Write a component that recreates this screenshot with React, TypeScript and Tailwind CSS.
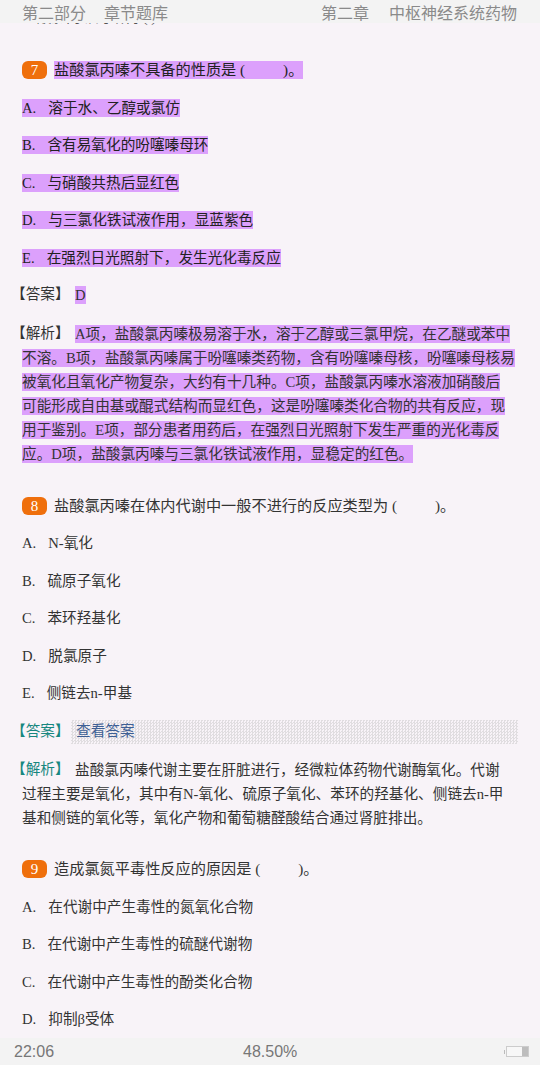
import React from 'react';

const serif = "font-['Liberation_Serif','Noto_Sans_CJK_SC',serif]";

const Mark: React.FC<{ on?: boolean; children: React.ReactNode }> = ({ on, children }) => (
  <span className={`inline-block h-[18px] leading-[18px] whitespace-pre ${on ? 'bg-[#dca0fc]' : ''}`}>{children}</span>
);

const Badge: React.FC<{ n: number }> = ({ n }) => (
  <span className="mr-[7px] flex h-[18px] w-[25px] shrink-0 items-center justify-center rounded-[6px] bg-[#ef6f0c] text-[15px] text-white">
    {n}
  </span>
);

const Question: React.FC<{ n: number; text: string; on?: boolean }> = ({ n, text, on }) => (
  <div className="flex h-[37.5px] items-center pl-[22px] text-[15.2px]">
    <Badge n={n} />
    <Mark on={on}>{text}</Mark>
  </div>
);

const Option: React.FC<{ k: string; text: string; on?: boolean }> = ({ k, text, on }) => (
  <div className="flex h-[37.5px] items-center pl-[22px]">
    <Mark on={on}>
      {k}.<span className="inline-block w-[12px]" />
      {text}
    </Mark>
  </div>
);

const Label: React.FC<{ text: string; teal?: boolean }> = ({ text, teal }) => (
  <span className={`-ml-[11px] w-[64px] shrink-0 ${teal ? 'text-[#17877f]' : 'text-[#333]'}`}>【{text}】</span>
);

const Para: React.FC<{ label: string; lines: string[]; on?: boolean; teal?: boolean }> = ({ label, lines, on, teal }) => (
  <div className="flex flex-col">
    {lines.map((line, i) => (
      <div key={i} className="flex h-[24px] items-center pl-[22px]">
        {i === 0 && <Label text={label} teal={teal} />}
        <Mark on={on}>{line}</Mark>
      </div>
    ))}
  </div>
);

export default function App() {
  return (
    <div className={`flex h-[1065px] w-[540px] flex-col overflow-hidden bg-[#f8f3f8] text-[14.65px] text-[#333] ${serif}`}>
      <header className="relative z-10 flex h-[23px] shrink-0 items-center justify-between bg-[#f3f3f3] pl-[22px] pr-[23px] font-['Noto_Sans_CJK_SC',sans-serif] text-[16px] text-[#8a8a8a]">
        <div className="flex gap-[18px]">
          <span>第二部分</span>
          <span>章节题库</span>
        </div>
        <div className="flex gap-[20px]">
          <span>第二章</span>
          <span>中枢神经系统药物</span>
        </div>
      </header>

      <main className="min-h-0 flex-1 overflow-hidden">
        <div className="-mt-[14px] flex h-[18px] items-center pl-[22px] text-[#555]">盐酸氯丙嗪的结构 ( )</div>
        <div className="h-[24.5px]" />

        <div className="text-[#222]">
          <Question n={7} on text="盐酸氯丙嗪不具备的性质是 (　　  )。" />
          <Option on k="A" text="溶于水、乙醇或氯仿" />
          <Option on k="B" text="含有易氧化的吩噻嗪母环" />
          <Option on k="C" text="与硝酸共热后显红色" />
          <Option on k="D" text="与三氯化铁试液作用，显蓝紫色" />
          <Option on k="E" text="在强烈日光照射下，发生光化毒反应" />
        </div>
        <div className="flex h-[37.5px] items-center pl-[22px]">
          <Label text="答案" />
          <Mark on>D</Mark>
        </div>
        <div className="h-[8px]" />
        <Para
          on
          label="解析"
          lines={[
            'A项，盐酸氯丙嗪极易溶于水，溶于乙醇或三氯甲烷，在乙醚或苯中',
            '不溶。B项，盐酸氯丙嗪属于吩噻嗪类药物，含有吩噻嗪母核，吩噻嗪母核易',
            '被氧化且氧化产物复杂，大约有十几种。C项，盐酸氯丙嗪水溶液加硝酸后',
            '可能形成自由基或醌式结构而显红色，这是吩噻嗪类化合物的共有反应，现',
            '用于鉴别。E项，部分患者用药后，在强烈日光照射下发生严重的光化毒反',
            '应。D项，盐酸氯丙嗪与三氯化铁试液作用，显稳定的红色。',
          ]}
        />
        <div className="h-[21px]" />

        <Question n={8} text="盐酸氯丙嗪在体内代谢中一般不进行的反应类型为 (　　  )。" />
        <Option k="A" text="N-氧化" />
        <Option k="B" text="硫原子氧化" />
        <Option k="C" text="苯环羟基化" />
        <Option k="D" text="脱氯原子" />
        <Option k="E" text="侧链去n-甲基" />
        <div className="flex h-[37.5px] items-center pl-[22px] pt-[3px]">
          <Label teal text="答案" />
          <div className="-ml-[4px] flex h-[24px] w-[447px] items-center bg-[repeating-conic-gradient(#e0dde0_0_25%,transparent_0_50%)] bg-[length:3px_3px] pl-[5px] text-[#3d5f94]">
            查看答案
          </div>
        </div>
        <div className="h-[8px]" />
        <Para
          teal
          label="解析"
          lines={[
            '盐酸氯丙嗪代谢主要在肝脏进行，经微粒体药物代谢酶氧化。代谢',
            '过程主要是氧化，其中有N-氧化、硫原子氧化、苯环的羟基化、侧链去n-甲',
            '基和侧链的氧化等，氧化产物和葡萄糖醛酸结合通过肾脏排出。',
          ]}
        />
        <div className="h-[21px]" />

        <Question n={9} text="造成氯氮平毒性反应的原因是 (　　  )。" />
        <Option k="A" text="在代谢中产生毒性的氮氧化合物" />
        <Option k="B" text="在代谢中产生毒性的硫醚代谢物" />
        <Option k="C" text="在代谢中产生毒性的酚类化合物" />
        <Option k="D" text="抑制β受体" />
      </main>

      <footer className="relative flex h-[27px] shrink-0 items-center justify-between bg-[#f3f3f3] pl-[14px] pr-[11px] font-['Liberation_Sans',sans-serif] text-[16px] text-[#777]">
        <span>22:06</span>
        <span className="absolute left-[243px]">48.50%</span>
        <div className="flex items-center gap-[1px]">
          <span className="h-[4px] w-[1px] bg-[#bbb]" />
          <div className="flex h-[11px] w-[23px] justify-end border border-[#ccc] bg-[#f7f7f7]">
            <span className="w-[6px] bg-[#bdbdbd]" />
          </div>
        </div>
      </footer>
    </div>
  );
}
